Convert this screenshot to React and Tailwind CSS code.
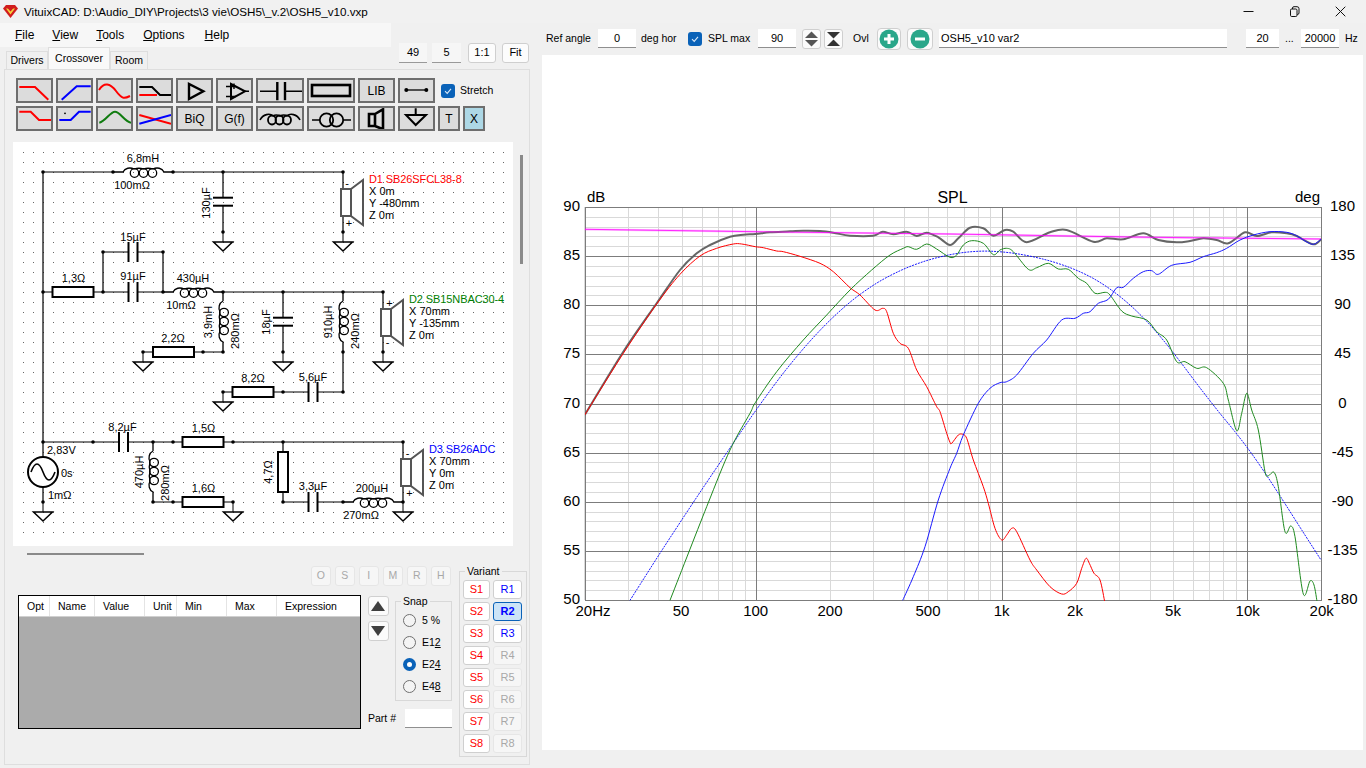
import React from "react";

const mk = (ox, oy, pairs) => {
  const out = [];
  for (let i = 0; i < pairs.length; i += 2) out.push([ox + pairs[i] / 3, oy + pairs[i + 1] / 3]);
  return out;
};
const soften = (p, n) => {
  let q = p;
  for (let k = 0; k < n; k++) {
    q = q.map((v, i) => (i === 0 || i === q.length - 1 ? v : [(q[i - 1][0] + 2 * v[0] + q[i + 1][0]) / 4, (q[i - 1][1] + 2 * v[1] + q[i + 1][1]) / 4]));
  }
  return q;
};
const smooth = (p) => {
  let d = `M${p[0][0].toFixed(1)} ${p[0][1].toFixed(1)}`;
  for (let i = 0; i < p.length - 1; i++) {
    const a = p[i - 1] || p[i], b = p[i], c = p[i + 1], e = p[i + 2] || c;
    const t = 0.16;
    d += `C${(b[0] + (c[0] - a[0]) * t).toFixed(1)} ${(b[1] + (c[1] - a[1]) * t).toFixed(1)} ${(c[0] - (e[0] - b[0]) * t).toFixed(1)} ${(c[1] - (e[1] - b[1]) * t).toFixed(1)} ${c[0].toFixed(1)} ${c[1].toFixed(1)}`;
  }
  return d;
};

const red = [
  ...mk(550, 180, [104,705,220,520,320,372,390,283,450,228,500,205,550,192,575,192,616,200,640,203,680,213,700,215,750,229,810,250,850,275,900,323,930,345,975,390,998,385,1010,395,1030,460,1050,490,1075,505,1100,570,1130,620,1160,680]),
  ...mk(550, 400, [1170,35,1190,100]),
  ...mk(950, 400, [0,127,5,130,25,105,38,103,50,115,70,180,100,260,115,310,135,385,155,420,170,405,185,385,200,395,240,480,260,510,300,560,335,582,355,575,380,550,395,505,408,475,418,490,432,520,450,540,465,610]),
];
const green = [
  ...mk(550, 400, [360,601,470,320,540,150,600,40]),
  ...mk(550, 180, [616,668,680,575,760,480,830,405,900,330,965,270,1020,225,1060,205,1075,200,1100,208,1130,192,1160,207]),
  ...mk(950, 180, [0,232,20,225,40,195,65,182,100,190,130,224,150,210,170,205,190,215,235,268,260,263,295,250,325,267,355,268,385,295,410,310,435,340,465,337,480,345,515,393,545,408,590,420,620,455,650,480,680,545,705,545,740,565,770,563,820,610]),
  ...mk(950, 400, [835,0,860,92,875,40,890,-20,905,30,925,90,945,215,955,227,972,217,985,260,1005,395,1022,378,1035,410,1060,582,1080,543,1092,555,1102,610]),
];
const dotted = soften([
  ...mk(550, 400, [240,601,330,455,430,305,550,130]),
  ...mk(550, 180, [616,690,700,570,800,450,900,355,970,310,1060,260,1130,238]),
  ...mk(950, 180, [0,222,60,212,110,210,190,213,290,235,370,262,430,290,490,328,550,380,600,430,650,490,700,555,760,640,810,705]),
  ...mk(950, 400, [860,95,892,145,950,215,1000,310,1060,395,1113,480]),
], 2);
const blue = [
  ...mk(550, 400, [1058,601,1090,530,1125,440,1165,300]),
  ...mk(950, 400, [0,205,20,160,40,105]),
  ...mk(950, 180, [85,670,120,625,150,608,170,605,200,585,250,520,290,480,335,420,375,415,400,400,420,395,445,370,475,358,500,323,520,322,550,295,580,275,605,272,625,283,665,256,720,247,760,230,800,218,830,205,870,180,910,165,960,155,1010,157,1040,167,1065,183,1090,193,1113,178]),
];
const grey = [
  ...mk(550, 180, [104,705,220,515,320,370,390,270,440,220,480,195,540,170,580,164,616,162,660,157,720,154,760,152,810,153,850,158,900,167,970,167,998,155,1030,163,1070,155,1100,168,1130,158,1165,172]),
  ...mk(950, 180, [0,195,25,175,60,143,100,145,130,167,165,150,190,155,230,187,300,157,350,150,430,185,470,175,520,178,580,160,625,180,680,187,720,183,760,175,800,180,835,190,885,157,920,168,965,157,1010,160,1040,168,1090,193,1113,178]),
];

const fx = (f) => Math.round(1001.7 + 245.6 * Math.log10(f / 1000)) + 0.5;
const Chart = () => {
  const L = 585, R = 1321, T = 207, B = 600;
  const y = (db) => Math.round(T + (90 - db) * 9.825) + 0.5;
  const dbs = [];
  for (let d = 50; d <= 90; d++) dbs.push(d);
  const majorDb = [90, 85, 80, 75, 70, 65, 60, 55, 50];
  const deg = [180, 135, 90, 45, 0, -45, -90, -135, -180];
  const xl = [["20Hz",593],["50",681],["100",755.7],["200",830],["500",928],["1k",1001.7],["2k",1075],["5k",1173],["10k",1247.7],["20k",1321.7]];
  const minor = [];
  for (const m of [10, 100, 1000]) for (const k of [2,3,4,5,6,7,8,9]) { const f = m * k; if (f >= 20) minor.push(f); }
  return (
    <svg width="821" height="695" viewBox="542 55 821 695" className="block">
      <defs><clipPath id="plot"><rect x={L} y={T} width={R - L + 1} height={B - T + 1} /></clipPath></defs>
      {dbs.filter((d) => d % 5).map((d) => <line key={d} x1={L} x2={R} y1={y(d)} y2={y(d)} stroke="#d9d9d9" />)}
      {minor.map((f) => <line key={f} x1={fx(f)} x2={fx(f)} y1={T} y2={B} stroke="#d9d9d9" />)}
      {majorDb.map((d) => <line key={d} x1={L} x2={R} y1={y(d)} y2={y(d)} stroke="#7c7c7c" />)}
      {[100, 1000, 10000].map((f) => <line key={f} x1={fx(f)} x2={fx(f)} y1={T} y2={B} stroke="#7c7c7c" />)}
      <rect x={L + 0.5} y={T + 0.5} width={R - L} height={B - T} fill="none" stroke="#7c7c7c" />
      <g clipPath="url(#plot)" fill="none">
        <path d="M585 229.3L755 231.7L950 234L1150 237.3L1321 239" stroke="#ff00ff" strokeOpacity="0.28" strokeWidth="2.2" />
        <path d={smooth(dotted)} stroke="#0000ff" strokeWidth="0.9" strokeDasharray="2 1" />
        <path d={smooth(grey)} stroke="#666666" strokeWidth="2" />
        <path d="M585 229.3L755 231.7L950 234L1150 237.3L1321 239" stroke="#ff00ff" strokeWidth="0.8" />
        <path d={smooth(red)} stroke="#ff0000" strokeWidth="1" />
        <path d={smooth(green)} stroke="#1f8a1f" strokeWidth="1" />
        <path d={smooth(blue)} stroke="#1a1aff" strokeWidth="1" />
      </g>
      <g fontSize="15" fill="#000">
        {majorDb.map((d) => <text key={d} x="580" y={y(d) + 3} textAnchor="end">{d}</text>)}
        {deg.map((d, i) => <text key={d} x="1342.5" y={y(90 - i * 5) + 3} textAnchor="middle">{d}</text>)}
        {xl.map(([t, x]) => <text key={t} x={x} y="615.5" textAnchor="middle">{t}</text>)}
        <text x="587" y="202">dB</text>
        <text x="952.5" y="203" textAnchor="middle" fontSize="16">SPL</text>
        <text x="1295" y="202">deg</text>
      </g>
    </svg>
  );
};

const Coil = ({ x, y, sw = 1.3, color = "#000" }) => (
  <g fill="none" stroke={color} strokeWidth={sw}>
    <path d={`M${x} ${y}H${x + 10}C${x + 12} ${y - 4} ${x + 17} ${y - 5} ${x + 21} ${y - 3}M${x + 51} ${y}C${x + 49} ${y - 4} ${x + 44} ${y - 5} ${x + 40} ${y - 3}M${x + 51} ${y}H${x + 60}`} />
    {[21.5, 30.5, 39.5].map((c) => <ellipse key={c} cx={x + c} cy={y + 1} rx="4.2" ry="4.4" />)}
    <path d={`M${x + 21} ${y - 3}Q${x + 26} ${y - 4.5} ${x + 30.5} ${y - 3}Q${x + 35} ${y - 4.5} ${x + 40} ${y - 3}`} />
  </g>
);
const CoilV = ({ x, y }) => <g transform={`translate(${x} ${y + 60}) rotate(-90)`}><Coil x={0} y={0} /></g>;
const Res = ({ x, y }) => <rect x={x} y={y - 5} width="41" height="10" fill="#fff" stroke="#000" strokeWidth="2" />;
const CapH = ({ x, y, h = 10 }) => (
  <g stroke="#000" strokeWidth="2"><line x1={x} x2={x} y1={y - h} y2={y + h} /><line x1={x + 9} x2={x + 9} y1={y - h} y2={y + h} /></g>
);
const CapV = ({ x, y }) => (
  <g stroke="#000" strokeWidth="2"><line x1={x - 10} x2={x + 10} y1={y} y2={y} /><line x1={x - 10} x2={x + 10} y1={y + 8} y2={y + 8} /></g>
);
const Gnd = ({ x, y }) => (
  <g fill="none" stroke="#000"><line x1={x} x2={x} y1={y} y2={y + 10} /><path d={`M${x - 9.5} ${y + 10}H${x + 9.5}L${x} ${y + 19}Z`} strokeWidth="1.5" /></g>
);
const Spk = ({ x, y }) => (
  <g fill="#fff" stroke="#555" strokeWidth="2">
    <path d={`M${x + 10} ${y}L${x + 22} ${y - 9}V${y + 36}L${x + 10} ${y + 27}Z`} />
    <rect x={x} y={y} width="10" height="27" />
  </g>
);
const wires = "M43 172H113M173 172H343M43 172V457M43 487V502M223 172V197.7M223 205.7V232M343 172V232M43 292H103M103 292H128.5M137.5 292H163M103 252H128.5M137.5 252H163M103 252V292M163 252V292M223 292H383M143 352H223M283 292V317.7M283 325.7V352M343 352V392M223 392H308.5M317.5 392H343M383 292V352M43 442H119M128 442H403M153 502H233M283 442V502M283 502H308.5M317.5 502H343M403 442V502";
const nodes = [[43,172],[113,172],[173,172],[223,172],[343,172],[223,232],[343,232],[103,252],[163,252],[43,292],[103,292],[163,292],[223,292],[283,292],[343,292],[383,292],[143,352],[203,352],[223,352],[283,352],[343,352],[383,352],[223,392],[283,392],[343,392],[43,442],[93,442],[153,442],[173,442],[233,442],[283,442],[403,442],[43,502],[153,502],[173,502],[233,502],[283,502],[343,502],[403,502]];
const labels = [
  ["6,8mH",143,162],["100mΩ",132,189],["15µF",133,241],["91µF",133,280],["1,3Ω",73.5,282],["430µH",193,282],["10mΩ",181,309],
  ["2,2Ω",173,342],["8,2Ω",253,382],["5,6µF",313,381],["8,2µF",122.5,431],["1,5Ω",203.5,432],["1,6Ω",203.5,492],["3,3µF",313,490],["200µH",372,492],["270mΩ",361,519],
];
const rot = [["130µF",210,203],["3,9mH",212,322],["280mΩ",239,331],["18µF",270,322],["910µH",332,322],["240mΩ",359,331],["470µH",143,472],["280mΩ",169,483],["4,7Ω",272,472]];
const info = [
  ["D1 SB26SFCL38-8",369,183,"#ff0000"],["X 0m",369,195],["Y -480mm",369,207],["Z 0m",369,219],
  ["D2 SB15NBAC30-4",409,303,"#008000"],["X 70mm",409,315],["Y -135mm",409,327],["Z 0m",409,339],
  ["D3 SB26ADC",429,453,"#0000ff"],["X 70mm",429,465],["Y 0m",429,477],["Z 0m",429,489],
  ["2,83V",47,454],["0s",61,477],["1mΩ",48,499],
];
const signs = [["-",347,187],["+",349,227],["+",389.5,307],["-",387.5,346],["-",407.5,457],["+",409.5,497]];

const Schematic = () => (
  <svg width="500" height="404" viewBox="13 142 500 404" className="block">
    <defs>
      <pattern id="dots" x="3" y="2" width="10" height="10" patternUnits="userSpaceOnUse">
        <rect x="0" y="0" width="1" height="1" fill="#666" />
      </pattern>
    </defs>
    <rect x="22" y="150" width="482" height="391" fill="url(#dots)" />
    <path d={wires} fill="none" stroke="#000" strokeWidth="1.2" />
    <Coil x={113} y={172} /><Coil x={163} y={292} /><Coil x={343} y={502} />
    <CoilV x={223} y={292} /><CoilV x={343} y={292} /><CoilV x={153} y={442} />
    <Res x={52.5} y={292} /><Res x={153} y={352} /><Res x={232.5} y={392} /><Res x={182.5} y={442} /><Res x={182.5} y={502} />
    <rect x="278" y="452" width="10" height="40" fill="#fff" stroke="#000" strokeWidth="2" />
    <CapH x={128.5} y={252} /><CapH x={128.5} y={292} /><CapH x={308.5} y={392} /><CapH x={119} y={442} /><CapH x={308.5} y={502} />
    <CapV x={223} y={197.7} /><CapV x={283} y={317.7} />
    <Gnd x={223} y={232} /><Gnd x={343} y={232} /><Gnd x={143} y={352} /><Gnd x={283} y={352} /><Gnd x={383} y={352} />
    <Gnd x={223} y={392} /><Gnd x={43} y={502} /><Gnd x={233} y={502} /><Gnd x={403} y={502} />
    <Spk x={341} y={189} /><Spk x={381} y={309} /><Spk x={401} y={459} />
    <circle cx="43" cy="472" r="15" fill="#fff" stroke="#000" strokeWidth="2" />
    <path d="M31 472Q37 456 43 472T55 472" fill="none" stroke="#000" strokeWidth="1.6" />
    {nodes.map(([x, y]) => <circle key={`${x}-${y}`} cx={x} cy={y} r="1.8" fill="#000" />)}
    <g fontSize="11" fill="#000">
      {labels.map(([t, x, y]) => <text key={t + x + y} x={x} y={y} textAnchor="middle">{t}</text>)}
      {rot.map(([t, x, y]) => <text key={t + x + y} transform={`translate(${x} ${y}) rotate(-90)`} textAnchor="middle">{t}</text>)}
      {info.map(([t, x, y, c]) => <text key={t + x + y} x={x} y={y} fill={c || "#000"} letterSpacing={c ? "-0.1" : "0"}>{t}</text>)}
      {signs.map(([t, x, y], i) => <text key={i} x={x} y={y} textAnchor="middle">{t}</text>)}
    </g>
  </svg>
);

const TB = ({ w = "w-[37px]", vb = "2 2 33 21", sw = 33, children, className = "bg-[#dcdcdc]" }) => (
  <div className={`${w} h-[25px] border-2 border-[#6e6e6e] flex items-center justify-center text-[12px] text-black ${className}`}>
    {vb ? <svg width={sw} height="21" viewBox={vb} fill="none" strokeWidth="2">{children}</svg> : children}
  </div>
);
const Check = () => (
  <div className="w-[14px] h-[14px] rounded-[3px] bg-[#0a62b8] flex items-center justify-center shrink-0">
    <svg width="10" height="10" viewBox="0 0 10 10" fill="none"><path d="M2 5.2L4.2 7.4L8 2.8" stroke="#d9e8f7" strokeWidth="1.1" /></svg>
  </div>
);
const Field = ({ w, children, align = "text-center", className = "" }) => (
  <div className={`${w} h-[19px] bg-white border-b border-[#8f8f8f] text-[11px] leading-[18px] ${align} ${className}`}>{children}</div>
);
const Small = ({ children }) => (
  <div className="w-[20.5px] h-[20px] rounded-[3px] border border-[#e6e6e6] bg-[#f6f6f6] text-[#a8a8a8] text-[10.5px] flex items-center justify-center">{children}</div>
);
const Arrow = ({ dir }) => (
  <div className="w-[20.5px] h-[20px] rounded-[3px] border border-[#d0d0d0] bg-[#fbfbfb] flex items-center justify-center">
    <svg width="14" height="12" viewBox="0 0 14 12"><path d={dir === "up" ? "M7 1L14 11H0Z" : "M7 11L14 1H0Z"} fill="#3f3f3f" /></svg>
  </div>
);
const Radio = ({ on, label, u }) => (
  <div className="flex items-center h-[13px] text-[10.5px]">
    {on
      ? <div className="w-[13px] h-[13px] rounded-full bg-[#0a62b8] flex items-center justify-center"><div className="w-[5px] h-[5px] rounded-full bg-white" /></div>
      : <div className="w-[13px] h-[13px] rounded-full border border-[#6f6f6f] bg-[#f4f4f4]" />}
    <span className="ml-[6px]">{label}{u && <span className="underline">{u}</span>}</span>
  </div>
);
const V = ({ t, c, sel }) => (
  <div className={`h-[18.5px] rounded-[3px] border flex items-center justify-center text-[11px] ${sel ? "bg-[#cce4f7] border-[#0a62b8] font-bold" : c === "text-[#a8a8a8]" ? "bg-[#f6f6f6] border-[#e6e6e6]" : "bg-white border-[#cfcfcf]"} ${c} ${t[0] === "R" ? "w-[29px] ml-[3px]" : "w-[27px]"}`}>{t}</div>
);
const Spin = ({ flip }) => (
  <div className="w-[19px] h-[20px] rounded-[3px] border border-[#cfcfcf] bg-[#fbfbfb] flex items-center justify-center">
    <svg width="15" height="16" viewBox="0 0 15 16">
      {flip
        ? <g fill="#333"><path d="M1 1H14L7.5 7.5Z" /><path d="M1 15H14L7.5 8.5Z" /></g>
        : <g fill="#555"><path d="M7.5 0.5L14 7H1Z" /><path d="M7.5 15.5L14 9H1Z" /></g>}
    </svg>
  </div>
);
const Round = ({ w, plus }) => (
  <div className={`${w} h-[22px] rounded-[4px] border border-[#cfcfcf] bg-[#fbfbfb] flex items-center justify-center`}>
    <svg width="20" height="20" viewBox="0 0 20 20">
      <circle cx="10" cy="10" r="9.5" fill="#2aa78a" />
      <path d={plus ? "M10 5V15M5 10H15" : "M5 10H15"} stroke="#fff" strokeWidth="3" />
    </svg>
  </div>
);
const Col = ({ w, name }) => (
  <div className={`${w} h-full pl-[8px] border-r border-[#e4e4e4] text-[10.5px] leading-[21px]`}>{name}</div>
);
const inductor = "M4 14C7 8 14 7 17 10M31 10C34 7 41 8 44 14M17 10Q20 8 24 10Q28 8 31 10";

export default function App() {
  return (
    <div className="w-[1366px] h-[768px] bg-[#f0f0f0] flex flex-col overflow-hidden font-['Liberation_Sans',Arial,sans-serif] text-black">
      <div className="h-[23px] flex items-center shrink-0 bg-[#f1f1f1]">
        <svg width="15" height="13" viewBox="0 0 15 13" className="ml-[3px] shrink-0">
          <path d="M0 3.5L3 0H12L15 3.5L7.5 13Z" fill="#d11d1d" />
          <path d="M3 3.5H12L7.5 9.5Z" fill="#f4d23c" />
          <path d="M4.5 3H10.5L7.5 6.5Z" fill="#d11d1d" />
        </svg>
        <span className="ml-[6px] text-[11.65px] whitespace-nowrap">VituixCAD: D:\Audio_DIY\Projects\3 vie\OSH5\_v.2\OSH5_v10.vxp</span>
        <div className="ml-auto mr-[3px] flex">
          <div className="w-[46px] flex justify-center"><svg width="11" height="11" viewBox="0 0 11 11"><path d="M0.5 5.5H10.5" stroke="#111" /></svg></div>
          <div className="w-[46px] flex justify-center"><svg width="11" height="11" viewBox="0 0 11 11" fill="none" stroke="#111"><rect x="1.5" y="3" width="6.5" height="7.5" rx="1.2" /><path d="M3.5 3V2Q3.5 0.7 5 0.7H8Q10 0.7 10 2.7V7Q10 8.5 8.2 8.5" /></svg></div>
          <div className="w-[46px] flex justify-center"><svg width="11" height="11" viewBox="0 0 11 11"><path d="M0.7 0.7L10.3 10.3M10.3 0.7L0.7 10.3" stroke="#111" /></svg></div>
        </div>
      </div>

      <div className="flex flex-1 min-h-0">
        <div className="w-[530px] shrink-0 flex flex-col">
          <div className="flex h-[46px] shrink-0">
            <div className="w-[399px] flex flex-col shrink-0">
              <div className="w-[391px] h-[24px] bg-[#f7f7f7] flex items-center text-[12px]">
                <span className="ml-[15px]"><u>F</u>ile</span>
                <span className="ml-[18px]"><u>V</u>iew</span>
                <span className="ml-[18px]"><u>T</u>ools</span>
                <span className="ml-[19px]"><u>O</u>ptions</span>
                <span className="ml-[20px]"><u>H</u>elp</span>
              </div>
              <div className="flex items-end h-[22px] text-[10.5px] ml-[6px]">
                <div className="w-[42px] h-[18px] border border-b-0 border-[#dedede] bg-[#f0f0f0] flex items-center justify-center">Drivers</div>
                <div className="w-[62px] h-[22px] border border-b-0 border-[#dedede] bg-[#f9f9f9] flex items-center justify-center">Crossover</div>
                <div className="w-[38px] h-[18px] border border-b-0 border-[#dedede] bg-[#f0f0f0] flex items-center justify-center">Room</div>
              </div>
            </div>
            <div className="flex mt-[19.5px] h-[20px] text-[11px]">
              <div className="w-[28px] bg-[#f6f6f6] border-b border-[#999] flex items-center justify-center">49</div>
              <div className="w-[29px] ml-[5px] bg-[#f6f6f6] border-b border-[#999] flex items-center justify-center">5</div>
              <div className="w-[28px] ml-[7px] rounded-[3px] border border-[#cfcfcf] bg-[#fcfcfc] flex items-center justify-center">1:1</div>
              <div className="w-[27px] ml-[6px] rounded-[3px] border border-[#cfcfcf] bg-[#fcfcfc] flex items-center justify-center">Fit</div>
            </div>
          </div>

          <div className="ml-[4px] mb-[3px] flex-1 min-h-0 border border-[#dedede] flex flex-col">
            <div className="pt-[8px] pl-[11px] flex flex-col gap-[3px]">
              <div className="flex gap-[3px] items-center">
                <TB><path d="M3.3 9H19L32.3 21.7" stroke="#f00" /></TB>
                <TB><path d="M5.7 21.7L20.7 8.3H34.7" stroke="#00f" /></TB>
                <TB><path d="M3 12C8 4 14 5 20 13S28 21 34 18" stroke="#f00" /></TB>
                <TB><path d="M3.3 17H21" stroke="#f00" /><path d="M3.3 9H16L24 17H35" stroke="#000" /></TB>
                <TB><path d="M13 6V21L27.3 13.3Z" stroke="#000" strokeWidth="2.4" /></TB>
                <TB><path d="M15 6V21L29 13.3Z" stroke="#000" strokeWidth="2" /><path d="M29 13.3H33M10 8.5H20M10 18.5H20M15 6V21M18 5.5V11" stroke="#000" strokeWidth="1.4" /></TB>
                <TB w="w-[48px]" vb="2 2 44 21" sw={44}><path d="M4 13.3H21M29 13.3H46" stroke="#000" strokeWidth="1.5" /><path d="M21.3 4V22.3M29 4V22.3" stroke="#000" strokeWidth="2.4" /></TB>
                <TB w="w-[48px]" vb="2 2 44 21" sw={44}><rect x="5" y="7" width="38" height="11" stroke="#000" strokeWidth="2.6" /></TB>
                <TB vb={null}>LIB</TB>
                <TB><path d="M8.3 12H28.3" stroke="#000" strokeWidth="1.3" /><circle cx="8.3" cy="12" r="2" fill="#000" stroke="none" /><circle cx="28.3" cy="12" r="2" fill="#000" stroke="none" /></TB>
                <div className="ml-[3px]"><Check /></div>
                <span className="ml-[2px] text-[10.5px]">Stretch</span>
              </div>
              <div className="flex gap-[3px]">
                <TB><path d="M3.3 5.7H14.7L23 14H35" stroke="#f00" /></TB>
                <TB><path d="M3.3 14H14.7L23 5.7H34.7" stroke="#00f" /><circle cx="9" cy="7.3" r="0.9" fill="#000" stroke="none" /></TB>
                <TB><path d="M3.3 16.7C10 15 14 5.7 19 5.7S28 15 35 16.7" stroke="#107c10" /></TB>
                <TB><path d="M3.3 9L35 17.7" stroke="#f00" /><path d="M3.3 17.7L35 9" stroke="#00f" /></TB>
                <TB vb={null}>BiQ</TB>
                <TB vb={null}>G(f)</TB>
                <TB w="w-[48px]" vb="2 2 44 21" sw={44}><path d={inductor} stroke="#000" strokeWidth="1.6" />{[16, 23.5, 31].map((c) => <ellipse key={c} cx={c} cy="14" rx="4" ry="4.5" stroke="#000" strokeWidth="1.8" />)}</TB>
                <TB w="w-[48px]" vb="2 2 44 21" sw={44}><path d="M5 14H13M36 14H44" stroke="#000" strokeWidth="1.5" /><circle cx="19.5" cy="14" r="6.7" stroke="#000" strokeWidth="1.8" /><circle cx="29.5" cy="14" r="6.7" stroke="#000" strokeWidth="1.8" /></TB>
                <TB><path d="M11 8H17V20H11ZM17 8L25 3.3V23.3L17 20" stroke="#000" strokeWidth="2.6" /></TB>
                <TB><path d="M17.7 2.3V9M8 9H28L17.7 19Z" stroke="#000" strokeWidth="2" /></TB>
                <TB w="w-[22px]" vb={null}>T</TB>
                <TB w="w-[22px]" vb={null} className="bg-[#add8e6]">X</TB>
              </div>
            </div>

            <div className="flex mt-[11px] ml-[8px] shrink-0">
              <div className="w-[500px] h-[404px] bg-white shrink-0"><Schematic /></div>
              <div className="ml-[7px] mt-[13px] w-[3px] h-[109px] bg-[#8a8a8a]" />
            </div>
            <div className="mt-[7px] ml-[22px] w-[117px] h-[2px] bg-[#8a8a8a] shrink-0" />

            <div className="flex ml-[13px] mt-[10px]">
              <div className="w-[434px] shrink-0 flex flex-col pt-[1px]">
                <div className="flex justify-end gap-[3.5px] pr-[1px]">
                  {["O","S","I","M","R","H"].map((t) => <Small key={t}>{t}</Small>)}
                </div>
                <div className="flex mt-[9px]">
                  <div className="w-[343px] h-[134px] border-[1.5px] border-black bg-[#ababab] shrink-0">
                    <div className="h-[21px] bg-white flex border-b border-[#d0d0d0]">
                      <Col w="w-[31px]" name="Opt" />
                      <Col w="w-[45px]" name="Name" />
                      <Col w="w-[50px]" name="Value" />
                      <Col w="w-[32px]" name="Unit" />
                      <Col w="w-[50px]" name="Min" />
                      <Col w="w-[50px]" name="Max" />
                      <div className="flex-1 pl-[8px] text-[10.5px] leading-[21px]">Expression</div>
                    </div>
                  </div>
                  <div className="ml-[7px] w-[84px] shrink-0 flex flex-col">
                    <div className="flex">
                      <div className="flex flex-col gap-[5px] mt-[0.5px]"><Arrow dir="up" /><Arrow dir="down" /></div>
                      <fieldset className="ml-[6.5px] w-[58px] h-[106px] border border-[#d8d8d8] pl-[7px]">
                        <legend className="-ml-[2px] px-[2px] text-[10.5px] leading-[13px]">Snap</legend>
                        <div className="flex flex-col gap-[9px] pt-[6px]">
                          <Radio label="5 %" />
                          <Radio label="E1" u="2" />
                          <Radio on label="E2" u="4" />
                          <Radio label="E4" u="8" />
                        </div>
                      </fieldset>
                    </div>
                    <div className="flex items-center mt-[8px]">
                      <span className="text-[10.5px] w-[37px]">Part #</span>
                      <div className="w-[47px] h-[19px] bg-white border-b border-[#8f8f8f]" />
                    </div>
                  </div>
                </div>
              </div>
              <fieldset className="ml-[7px] w-[68px] h-[192px] border border-[#d8d8d8] pl-[3px]">
                <legend className="ml-[2px] px-[2px] text-[10.5px] leading-[13px]">Variant</legend>
                <div className="flex flex-col gap-[3.5px] pt-[2px]">
                  {[1,2,3,4,5,6,7,8].map((n) => (
                    <div key={n} className="flex">
                      <V t={`S${n}`} c="text-[#ff0000]" />
                      <V t={`R${n}`} sel={n === 2} c={n <= 3 ? "text-[#0000ff]" : "text-[#a8a8a8]"} />
                    </div>
                  ))}
                </div>
              </fieldset>
            </div>
          </div>
        </div>

        <div className="flex-1 min-w-0 flex flex-col pl-[12px]">
          <div className="h-[32px] pt-[6px] flex items-start text-[10.5px] leading-[19px] shrink-0">
            <span className="ml-[4px] w-[52px]">Ref angle</span>
            <Field w="w-[38px]">0</Field>
            <span className="ml-[5px] w-[47px]">deg hor</span>
            <div className="mt-[2.5px]"><Check /></div>
            <span className="ml-[6px] w-[50px]">SPL max</span>
            <Field w="w-[38px]">90</Field>
            <div className="ml-[6px]"><Spin /></div>
            <div className="ml-[3px]"><Spin flip /></div>
            <span className="ml-[10px] w-[24px]">Ovl</span>
            <div className="-mt-[1px]"><Round w="w-[24px]" plus /></div>
            <div className="ml-[6px] -mt-[1px]"><Round w="w-[26px]" /></div>
            <Field w="w-[288px] ml-[6px] pl-[2px]" align="text-left">OSH5_v10 var2</Field>
            <Field w="w-[33px] ml-[19px]">20</Field>
            <span className="ml-[6px] w-[10px]">...</span>
            <Field w="w-[38px] ml-[6px]">20000</Field>
            <span className="ml-[6px]">Hz</span>
          </div>
          <div className="w-[821px] h-[695px] bg-white shrink-0"><Chart /></div>
        </div>
      </div>
    </div>
  );
}
